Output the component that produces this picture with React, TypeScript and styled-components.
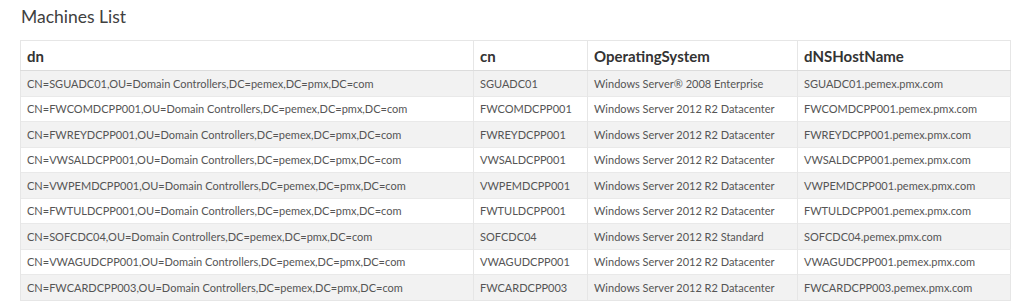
import React, { FC } from 'react';
import styled, { createGlobalStyle } from 'styled-components';

const GlobalStyle = createGlobalStyle`
	body {
		margin: 0;
		background: #ffffff;
		font-family: Lato, 'Open Sans', sans-serif;
	}
`;

const Page = styled.div`
	padding: 6px 14px 0 20px;
`;

const Title = styled.h3`
	margin: 0 0 12px 1px;
	font-size: 17.5px;
	font-weight: 400;
	line-height: 22px;
	color: #404040;
`;

const Table = styled.table`
	width: 990px;
	border-collapse: collapse;
	table-layout: fixed;
	border: 1px solid #e6e6e6;
`;

const HeadCell = styled.th<{ $width: number }>`
	box-sizing: border-box;
	width: ${(p) => p.$width}px;
	height: 30px;
	padding: 0 6px;
	text-align: left;
	font-size: 15px;
	font-weight: 700;
	color: #333333;
	border-left: 1px solid #e6e6e6;
	border-bottom: 1px solid #dcdcdc;
	background: #ffffff;
`;

const Row = styled.tr<{ $striped: boolean }>`
	height: 25.5px;
	background: ${(p) => (p.$striped ? '#f2f2f2' : '#ffffff')};
`;

const Cell = styled.td`
	padding: 0 6px;
	font-size: 11px;
	color: #555555;
	white-space: nowrap;
	overflow: hidden;
	border-left: 1px solid #e6e6e6;
	border-top: 1px solid #e9e9e9;
`;

type Machine = { dn: string; cn: string; os: string; host: string };

const columns = [
	{ key: 'dn', label: 'dn', width: 453 },
	{ key: 'cn', label: 'cn', width: 114 },
	{ key: 'os', label: 'OperatingSystem', width: 210 },
	{ key: 'host', label: 'dNSHostName', width: 213 },
];

const suffix = ',OU=Domain Controllers,DC=pemex,DC=pmx,DC=com';
const dc = 'Windows Server 2012 R2 Datacenter';

const make = (cn: string, os: string): Machine => ({
	dn: `CN=${cn}${suffix}`,
	cn,
	os,
	host: `${cn}.pemex.pmx.com`,
});

const machines: Machine[] = [
	make('SGUADC01', 'Windows Server® 2008 Enterprise'),
	make('FWCOMDCPP001', dc),
	make('FWREYDCPP001', dc),
	make('VWSALDCPP001', dc),
	make('VWPEMDCPP001', dc),
	make('FWTULDCPP001', dc),
	make('SOFCDC04', 'Windows Server 2012 R2 Standard'),
	make('VWAGUDCPP001', dc),
	make('FWCARDCPP003', dc),
];

const App: FC = () => {
	return (
		<Page>
			<GlobalStyle />
			<Title>Machines List</Title>
			<Table>
				<thead>
					<tr>
						{columns.map((c) => (
							<HeadCell key={c.key} $width={c.width}>
								{c.label}
							</HeadCell>
						))}
					</tr>
				</thead>
				<tbody>
					{machines.map((m, i) => (
						<Row key={m.cn} $striped={i % 2 === 0}>
							<Cell>{m.dn}</Cell>
							<Cell>{m.cn}</Cell>
							<Cell>{m.os}</Cell>
							<Cell>{m.host}</Cell>
						</Row>
					))}
				</tbody>
			</Table>
		</Page>
	);
};

export default App;
